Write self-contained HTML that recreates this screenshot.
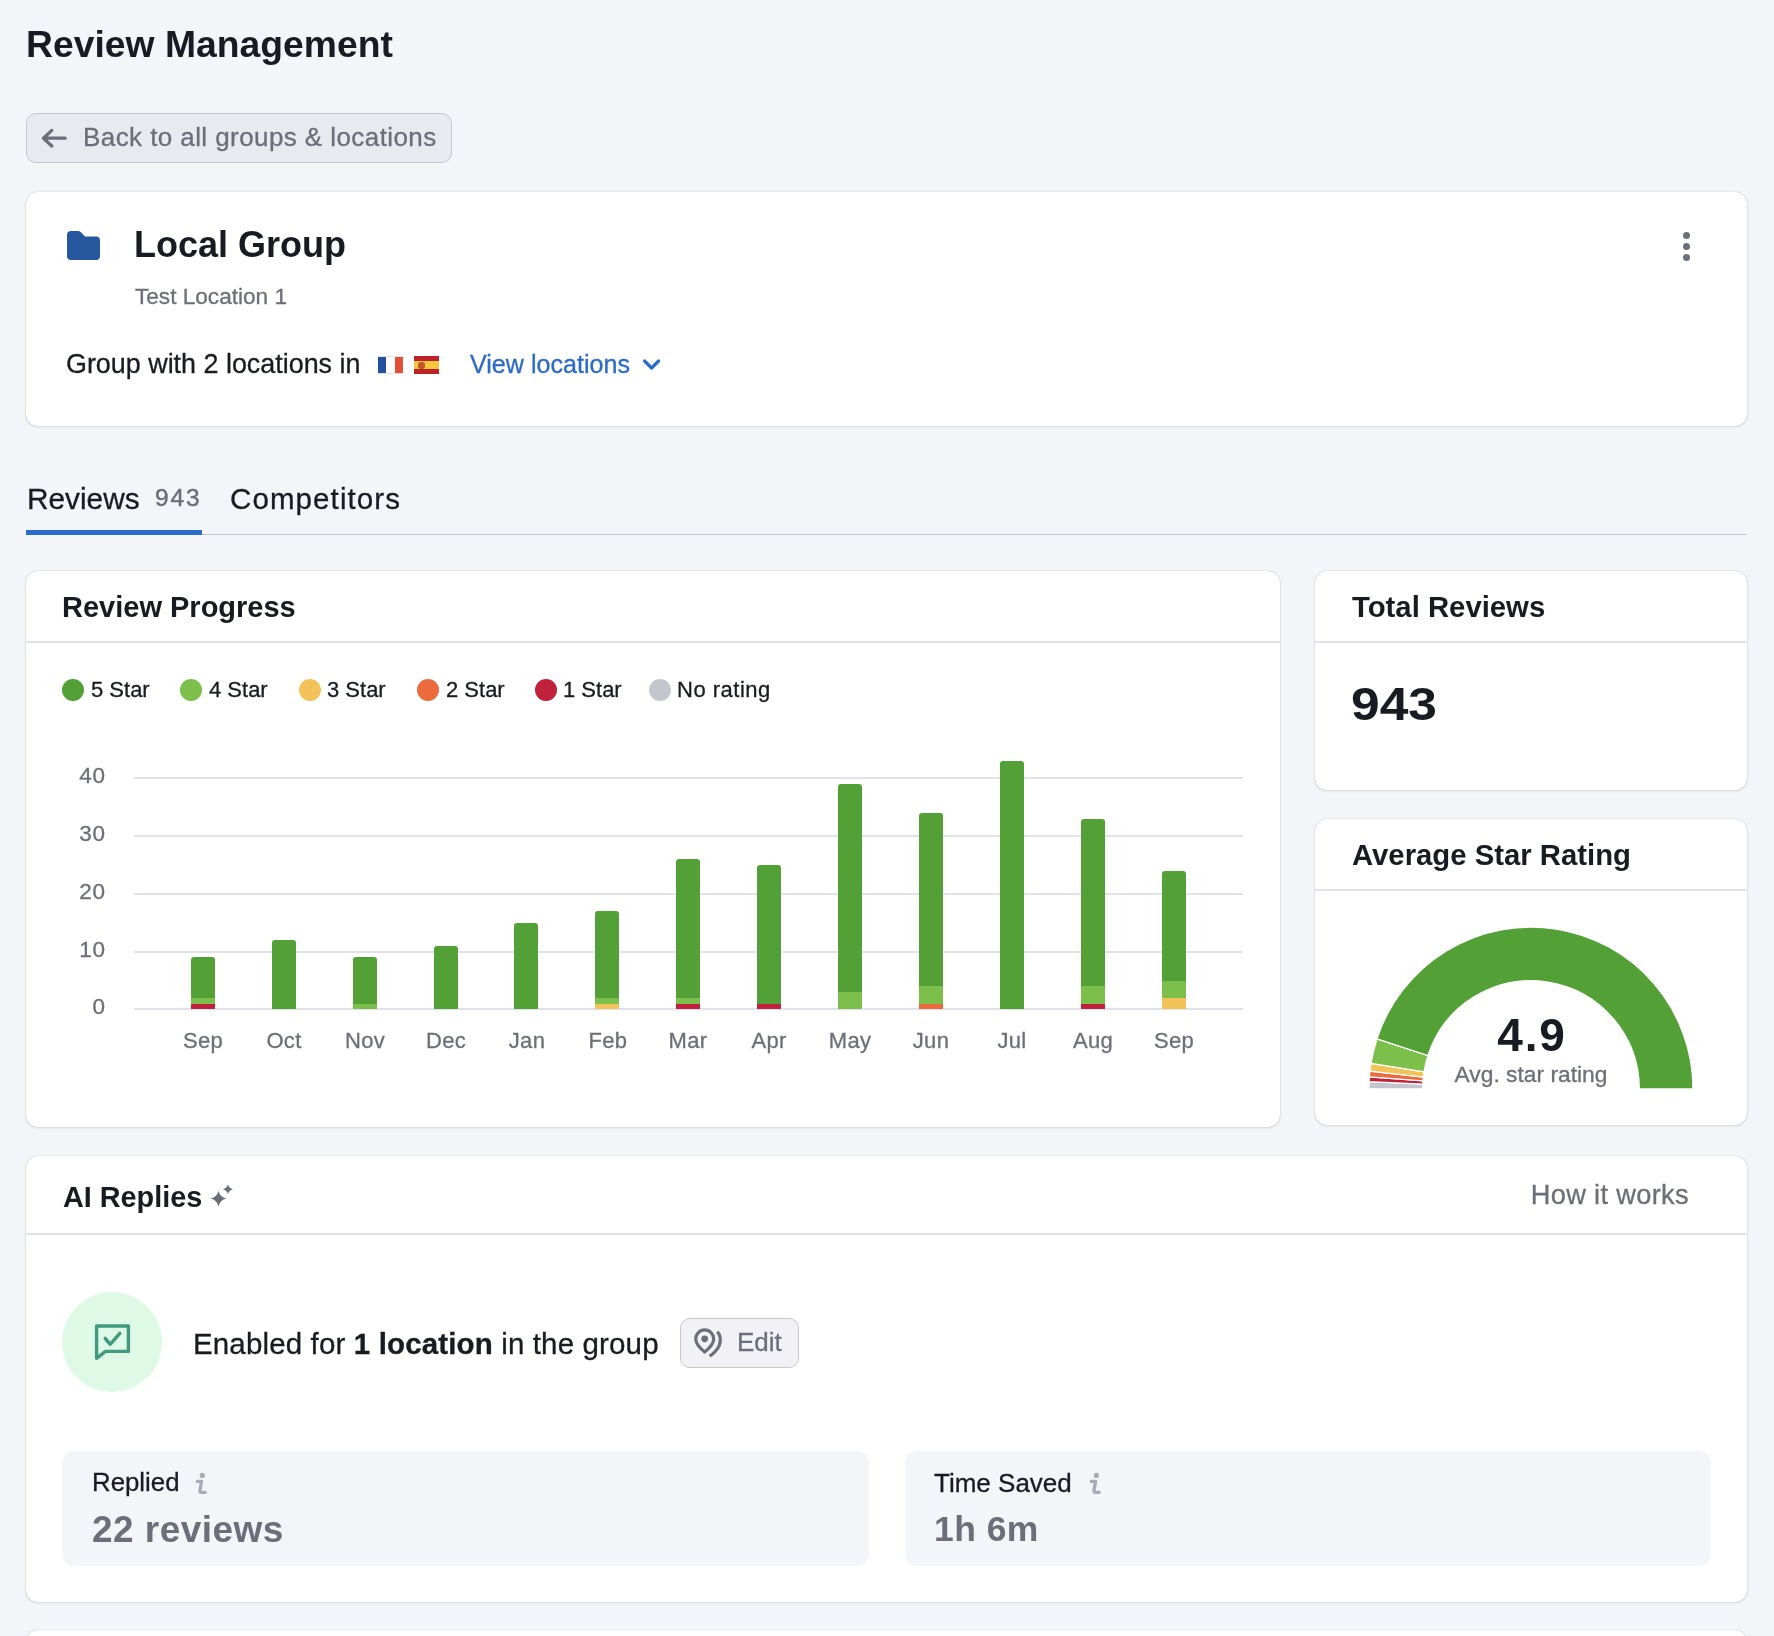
<!DOCTYPE html>
<html><head><meta charset="utf-8"><title>Review Management</title>
<style>
html,body{margin:0;padding:0;}
body{width:1774px;height:1636px;overflow:hidden;background:#F3F5F9;font-family:"Liberation Sans",sans-serif;position:relative;}
.t{position:absolute;white-space:nowrap;line-height:1;-webkit-font-smoothing:antialiased;will-change:transform;}
b{font-weight:700;}
</style></head><body>
<div class="t" style="left:26px;top:25.63px;font-size:37.3px;font-weight:700;color:#191B23;">Review Management</div>
<div style="position:absolute;left:26px;top:113px;width:426px;height:50px;background:#E9EAF0;border:1px solid #C6C8D0;box-sizing:border-box;border-radius:10px;"></div>
<svg style="position:absolute;left:40px;top:126px" width="28" height="24" viewBox="0 0 28 24"><path d="M11.8 4.4 L3.4 12.2 L11.8 20 M3.4 12.2 H25.2" fill="none" stroke="#6C6E79" stroke-width="3.3" stroke-linecap="round" stroke-linejoin="round"/></svg>
<div class="t" style="left:82.5px;top:123.99px;font-size:26px;font-weight:400;color:#6C6E79;letter-spacing:0.42px;-webkit-text-stroke:0.3px currentColor;">Back to all groups &amp; locations</div>
<div style="position:absolute;left:26px;top:192px;width:1721px;height:234px;background:#fff;border-radius:12px;box-shadow:0 0 1px rgba(25,27,35,.35),0 1px 3px rgba(25,27,35,.10);"></div>
<svg style="position:absolute;left:67px;top:231px" width="33" height="29" viewBox="0 0 33 29"><path d="M0 4 Q0 0 4 0 H10.5 Q12.8 0 14.3 1.4 L18 5.6 H29 Q33 5.6 33 9.6 V25 Q33 29 29 29 H4 Q0 29 0 25 Z" fill="#26579F"/></svg>
<div class="t" style="left:134px;top:226.93px;font-size:36px;font-weight:700;color:#191B23;">Local Group</div>
<div class="t" style="left:135px;top:285.87px;font-size:22.6px;font-weight:400;color:#6C6E79;-webkit-text-stroke:0.3px currentColor;">Test Location 1</div>
<div class="t" style="left:66px;top:351.23px;font-size:26.9px;font-weight:400;color:#191B23;-webkit-text-stroke:0.3px currentColor;">Group with 2 locations in</div>
<div style="position:absolute;left:378px;top:356px;width:25px;height:18px;background:linear-gradient(180deg,#E2E2E2 0 1px,transparent 1px calc(100% - 1px),#E2E2E2 calc(100% - 1px)),linear-gradient(90deg,#23519F 0 33%,#FFFFFF 33% 66%,#E2503B 66%);"></div>
<div style="position:absolute;left:414px;top:356px;width:25px;height:18px;background:linear-gradient(180deg,#BC2227 0 26%,#F4C73E 26% 74%,#BC2227 74%);"></div>
<div style="position:absolute;left:418.3px;top:362.2px;width:6.5px;height:6.5px;background:#B8362A;border-radius:45%;opacity:.8"></div>
<div class="t" style="left:469.5px;top:351.75px;font-size:25.1px;font-weight:400;color:#2B6BC7;-webkit-text-stroke:0.3px currentColor;">View locations</div>
<svg style="position:absolute;left:641px;top:357px" width="22" height="16" viewBox="0 0 22 16"><path d="M3.6 4 L10.6 11 L17.6 4" fill="none" stroke="#2B6BC7" stroke-width="3.2" stroke-linecap="round" stroke-linejoin="round"/></svg>
<div style="position:absolute;left:1682.8px;top:231.9px;width:7.2px;height:7.2px;border-radius:50%;background:#6C6E79"></div>
<div style="position:absolute;left:1682.8px;top:242.8px;width:7.2px;height:7.2px;border-radius:50%;background:#6C6E79"></div>
<div style="position:absolute;left:1682.8px;top:253.6px;width:7.2px;height:7.2px;border-radius:50%;background:#6C6E79"></div>
<div class="t" style="left:26.5px;top:483.77px;font-size:29.8px;font-weight:400;color:#191B23;-webkit-text-stroke:0.3px currentColor;">Reviews</div>
<div class="t" style="left:154.8px;top:485.56px;font-size:24.5px;font-weight:400;color:#6C6E79;letter-spacing:1.9px;-webkit-text-stroke:0.45px currentColor;">943</div>
<div class="t" style="left:230px;top:484.03px;font-size:29.5px;font-weight:400;color:#191B23;letter-spacing:1.1px;-webkit-text-stroke:0.3px currentColor;">Competitors</div>
<div style="position:absolute;left:26px;top:534px;width:1721px;height:1px;background:#C4C7CF;"></div>
<div style="position:absolute;left:26px;top:530px;width:176px;height:5px;background:#2B6BC7;"></div>
<div style="position:absolute;left:26px;top:571px;width:1253.5px;height:556px;background:#fff;border-radius:12px;box-shadow:0 0 1px rgba(25,27,35,.35),0 1px 3px rgba(25,27,35,.10);"></div>
<div class="t" style="left:62px;top:592.85px;font-size:29px;font-weight:700;color:#191B23;">Review Progress</div>
<div style="position:absolute;left:26px;top:641px;width:1253.5px;height:2px;background:#E0E1E9;"></div>
<div style="position:absolute;left:62px;top:678.5px;width:22px;height:22.0px;background:#52A036;border-radius:50%;"></div>
<div class="t" style="left:91.2px;top:678.88px;font-size:22px;font-weight:400;color:#191B23;-webkit-text-stroke:0.3px currentColor;">5 Star</div>
<div style="position:absolute;left:180px;top:678.5px;width:22px;height:22.0px;background:#7DBF4B;border-radius:50%;"></div>
<div class="t" style="left:208.8px;top:678.88px;font-size:22px;font-weight:400;color:#191B23;-webkit-text-stroke:0.3px currentColor;">4 Star</div>
<div style="position:absolute;left:299px;top:678.5px;width:22px;height:22.0px;background:#F3C35A;border-radius:50%;"></div>
<div class="t" style="left:327px;top:678.88px;font-size:22px;font-weight:400;color:#191B23;-webkit-text-stroke:0.3px currentColor;">3 Star</div>
<div style="position:absolute;left:417px;top:678.5px;width:22px;height:22.0px;background:#EB6B3C;border-radius:50%;"></div>
<div class="t" style="left:445.5px;top:678.88px;font-size:22px;font-weight:400;color:#191B23;-webkit-text-stroke:0.3px currentColor;">2 Star</div>
<div style="position:absolute;left:535px;top:678.5px;width:22px;height:22.0px;background:#C1213A;border-radius:50%;"></div>
<div class="t" style="left:562.5px;top:678.88px;font-size:22px;font-weight:400;color:#191B23;-webkit-text-stroke:0.3px currentColor;">1 Star</div>
<div style="position:absolute;left:649px;top:678.5px;width:22px;height:22.0px;background:#C4C6CE;border-radius:50%;"></div>
<div class="t" style="left:677px;top:678.88px;font-size:22px;font-weight:400;color:#191B23;letter-spacing:0.5px;-webkit-text-stroke:0.3px currentColor;">No rating</div>
<div style="position:absolute;left:134px;top:1008px;width:1109px;height:2px;background:#E0E1E9;"></div>
<div class="t" style="left:-694.4px;width:800px;text-align:right;top:996.35px;font-size:22.5px;font-weight:400;color:#6C6E79;letter-spacing:0.9px;-webkit-text-stroke:0.3px currentColor;">0</div>
<div style="position:absolute;left:134px;top:951px;width:1109px;height:2px;background:#E0E1E9;"></div>
<div class="t" style="left:-694.4px;width:800px;text-align:right;top:938.55px;font-size:22.5px;font-weight:400;color:#6C6E79;letter-spacing:0.9px;-webkit-text-stroke:0.3px currentColor;">10</div>
<div style="position:absolute;left:134px;top:893px;width:1109px;height:2px;background:#E0E1E9;"></div>
<div class="t" style="left:-694.4px;width:800px;text-align:right;top:880.75px;font-size:22.5px;font-weight:400;color:#6C6E79;letter-spacing:0.9px;-webkit-text-stroke:0.3px currentColor;">20</div>
<div style="position:absolute;left:134px;top:835px;width:1109px;height:2px;background:#E0E1E9;"></div>
<div class="t" style="left:-694.4px;width:800px;text-align:right;top:822.95px;font-size:22.5px;font-weight:400;color:#6C6E79;letter-spacing:0.9px;-webkit-text-stroke:0.3px currentColor;">30</div>
<div style="position:absolute;left:134px;top:777px;width:1109px;height:2px;background:#E0E1E9;"></div>
<div class="t" style="left:-694.4px;width:800px;text-align:right;top:765.15px;font-size:22.5px;font-weight:400;color:#6C6E79;letter-spacing:0.9px;-webkit-text-stroke:0.3px currentColor;">40</div>
<div style="position:absolute;left:190.8px;top:1003.72px;width:24.0px;height:5.779999999999973px;background:#C1213A;"></div>
<div style="position:absolute;left:190.8px;top:997.94px;width:24.0px;height:5.779999999999973px;background:#7DBF4B;"></div>
<div style="position:absolute;left:190.8px;top:957.48px;width:24.0px;height:40.460000000000036px;background:#52A036;border-radius:3px 3px 0 0;"></div>
<div class="t" style="left:-197.04999999999998px;width:800px;text-align:center;top:1029.78px;font-size:22px;font-weight:400;color:#6C6E79;letter-spacing:0.3px;-webkit-text-stroke:0.3px currentColor;">Sep</div>
<div style="position:absolute;left:271.72px;top:940.14px;width:24.0px;height:69.36000000000001px;background:#52A036;border-radius:3px 3px 0 0;"></div>
<div class="t" style="left:-116.13px;width:800px;text-align:center;top:1029.78px;font-size:22px;font-weight:400;color:#6C6E79;letter-spacing:0.3px;-webkit-text-stroke:0.3px currentColor;">Oct</div>
<div style="position:absolute;left:352.64px;top:1003.72px;width:24.0px;height:5.779999999999973px;background:#7DBF4B;"></div>
<div style="position:absolute;left:352.64px;top:957.48px;width:24.0px;height:46.24000000000001px;background:#52A036;border-radius:3px 3px 0 0;"></div>
<div class="t" style="left:-35.210000000000036px;width:800px;text-align:center;top:1029.78px;font-size:22px;font-weight:400;color:#6C6E79;letter-spacing:0.3px;-webkit-text-stroke:0.3px currentColor;">Nov</div>
<div style="position:absolute;left:433.56px;top:945.92px;width:24.0px;height:63.58000000000004px;background:#52A036;border-radius:3px 3px 0 0;"></div>
<div class="t" style="left:45.70999999999998px;width:800px;text-align:center;top:1029.78px;font-size:22px;font-weight:400;color:#6C6E79;letter-spacing:0.3px;-webkit-text-stroke:0.3px currentColor;">Dec</div>
<div style="position:absolute;left:514.48px;top:922.8px;width:24.0px;height:86.70000000000005px;background:#52A036;border-radius:3px 3px 0 0;"></div>
<div class="t" style="left:126.63px;width:800px;text-align:center;top:1029.78px;font-size:22px;font-weight:400;color:#6C6E79;letter-spacing:0.3px;-webkit-text-stroke:0.3px currentColor;">Jan</div>
<div style="position:absolute;left:595.4px;top:1003.72px;width:24.0px;height:5.779999999999973px;background:#F3C35A;"></div>
<div style="position:absolute;left:595.4px;top:997.94px;width:24.0px;height:5.779999999999973px;background:#7DBF4B;"></div>
<div style="position:absolute;left:595.4px;top:911.24px;width:24.0px;height:86.70000000000005px;background:#52A036;border-radius:3px 3px 0 0;"></div>
<div class="t" style="left:207.54999999999995px;width:800px;text-align:center;top:1029.78px;font-size:22px;font-weight:400;color:#6C6E79;letter-spacing:0.3px;-webkit-text-stroke:0.3px currentColor;">Feb</div>
<div style="position:absolute;left:676.32px;top:1003.72px;width:24.0px;height:5.779999999999973px;background:#C1213A;"></div>
<div style="position:absolute;left:676.32px;top:997.94px;width:24.0px;height:5.779999999999973px;background:#7DBF4B;"></div>
<div style="position:absolute;left:676.32px;top:859.22px;width:24.0px;height:138.72000000000003px;background:#52A036;border-radius:3px 3px 0 0;"></div>
<div class="t" style="left:288.47px;width:800px;text-align:center;top:1029.78px;font-size:22px;font-weight:400;color:#6C6E79;letter-spacing:0.3px;-webkit-text-stroke:0.3px currentColor;">Mar</div>
<div style="position:absolute;left:757.24px;top:1003.72px;width:24.0px;height:5.779999999999973px;background:#C1213A;"></div>
<div style="position:absolute;left:757.24px;top:865.0px;width:24.0px;height:138.72000000000003px;background:#52A036;border-radius:3px 3px 0 0;"></div>
<div class="t" style="left:369.39px;width:800px;text-align:center;top:1029.78px;font-size:22px;font-weight:400;color:#6C6E79;letter-spacing:0.3px;-webkit-text-stroke:0.3px currentColor;">Apr</div>
<div style="position:absolute;left:838.16px;top:992.16px;width:24.0px;height:17.340000000000032px;background:#7DBF4B;"></div>
<div style="position:absolute;left:838.16px;top:784.08px;width:24.0px;height:208.07999999999993px;background:#52A036;border-radius:3px 3px 0 0;"></div>
<div class="t" style="left:450.30999999999995px;width:800px;text-align:center;top:1029.78px;font-size:22px;font-weight:400;color:#6C6E79;letter-spacing:0.3px;-webkit-text-stroke:0.3px currentColor;">May</div>
<div style="position:absolute;left:919.08px;top:1003.72px;width:24.0px;height:5.779999999999973px;background:#EB6B3C;"></div>
<div style="position:absolute;left:919.08px;top:986.38px;width:24.0px;height:17.340000000000032px;background:#7DBF4B;"></div>
<div style="position:absolute;left:919.08px;top:812.98px;width:24.0px;height:173.39999999999998px;background:#52A036;border-radius:3px 3px 0 0;"></div>
<div class="t" style="left:531.23px;width:800px;text-align:center;top:1029.78px;font-size:22px;font-weight:400;color:#6C6E79;letter-spacing:0.3px;-webkit-text-stroke:0.3px currentColor;">Jun</div>
<div style="position:absolute;left:1000.0px;top:760.96px;width:24.0px;height:248.53999999999996px;background:#52A036;border-radius:3px 3px 0 0;"></div>
<div class="t" style="left:612.15px;width:800px;text-align:center;top:1029.78px;font-size:22px;font-weight:400;color:#6C6E79;letter-spacing:0.3px;-webkit-text-stroke:0.3px currentColor;">Jul</div>
<div style="position:absolute;left:1080.92px;top:1003.72px;width:24.0px;height:5.779999999999973px;background:#C1213A;"></div>
<div style="position:absolute;left:1080.92px;top:986.38px;width:24.0px;height:17.340000000000032px;background:#7DBF4B;"></div>
<div style="position:absolute;left:1080.92px;top:818.76px;width:24.0px;height:167.62px;background:#52A036;border-radius:3px 3px 0 0;"></div>
<div class="t" style="left:693.0700000000002px;width:800px;text-align:center;top:1029.78px;font-size:22px;font-weight:400;color:#6C6E79;letter-spacing:0.3px;-webkit-text-stroke:0.3px currentColor;">Aug</div>
<div style="position:absolute;left:1161.84px;top:997.94px;width:24.0px;height:11.559999999999945px;background:#F3C35A;"></div>
<div style="position:absolute;left:1161.84px;top:980.6px;width:24.0px;height:17.340000000000032px;background:#7DBF4B;"></div>
<div style="position:absolute;left:1161.84px;top:870.78px;width:24.0px;height:109.82000000000005px;background:#52A036;border-radius:3px 3px 0 0;"></div>
<div class="t" style="left:773.99px;width:800px;text-align:center;top:1029.78px;font-size:22px;font-weight:400;color:#6C6E79;letter-spacing:0.3px;-webkit-text-stroke:0.3px currentColor;">Sep</div>
<div style="position:absolute;left:1315px;top:571px;width:432px;height:219px;background:#fff;border-radius:12px;box-shadow:0 0 1px rgba(25,27,35,.35),0 1px 3px rgba(25,27,35,.10);"></div>
<div class="t" style="left:1351.5px;top:591.80px;font-size:29.3px;font-weight:700;color:#191B23;">Total Reviews</div>
<div style="position:absolute;left:1315px;top:641px;width:432px;height:2px;background:#E0E1E9;"></div>
<div class="t" style="left:1351px;top:681.26px;font-size:46px;font-weight:700;color:#191B23;transform:scaleX(1.12);transform-origin:0 0;">943</div>
<div style="position:absolute;left:1315px;top:819px;width:432px;height:306px;background:#fff;border-radius:12px;box-shadow:0 0 1px rgba(25,27,35,.35),0 1px 3px rgba(25,27,35,.10);"></div>
<div class="t" style="left:1351.5px;top:839.80px;font-size:29.3px;font-weight:700;color:#191B23;">Average Star Rating</div>
<div style="position:absolute;left:1315px;top:889px;width:432px;height:2px;background:#E0E1E9;"></div>
<svg style="position:absolute;left:1361px;top:918.5px" width="340" height="180" viewBox="-170 -170 340 180"><path d="M-162.00 -0.00 A162 162 0 0 1 -161.83 -7.35 L-108.19 -4.91 A108.3 108.3 0 0 0 -108.30 -0.00 Z" fill="#C4C6CE" stroke="#fff" stroke-width="1.3" stroke-linejoin="miter"/><path d="M-161.83 -7.35 A162 162 0 0 1 -161.54 -12.15 L-108.00 -8.12 A108.3 108.3 0 0 0 -108.19 -4.91 Z" fill="#C1213A" stroke="#fff" stroke-width="1.3" stroke-linejoin="miter"/><path d="M-161.54 -12.15 A162 162 0 0 1 -161.02 -17.78 L-107.65 -11.88 A108.3 108.3 0 0 0 -108.00 -8.12 Z" fill="#EB6B3C" stroke="#fff" stroke-width="1.3" stroke-linejoin="miter"/><path d="M-161.02 -17.78 A162 162 0 0 1 -159.96 -25.62 L-106.94 -17.13 A108.3 108.3 0 0 0 -107.65 -11.88 Z" fill="#F3C35A" stroke="#fff" stroke-width="1.3" stroke-linejoin="miter"/><path d="M-159.96 -25.62 A162 162 0 0 1 -154.07 -50.06 L-103.00 -33.47 A108.3 108.3 0 0 0 -106.94 -17.13 Z" fill="#7DBF4B" stroke="#fff" stroke-width="1.3" stroke-linejoin="miter"/><path d="M-154.07 -50.06 A162 162 0 0 1 162.00 -0.00 L108.30 -0.00 A108.3 108.3 0 0 0 -103.00 -33.47 Z" fill="#52A036" stroke="#fff" stroke-width="1.3" stroke-linejoin="miter"/></svg>
<div class="t" style="left:1132px;width:800px;text-align:center;top:1012.06px;font-size:46px;font-weight:700;color:#191B23;letter-spacing:1.8px;">4.9</div>
<div class="t" style="left:1131px;width:800px;text-align:center;top:1062.70px;font-size:22.8px;font-weight:400;color:#6C6E79;-webkit-text-stroke:0.3px currentColor;">Avg. star rating</div>
<div style="position:absolute;left:26px;top:1156px;width:1721px;height:446px;background:#fff;border-radius:12px;box-shadow:0 0 1px rgba(25,27,35,.35),0 1px 3px rgba(25,27,35,.10);"></div>
<div class="t" style="left:62.5px;top:1182.62px;font-size:28.8px;font-weight:700;color:#191B23;">AI Replies</div>
<svg style="position:absolute;left:208px;top:1180px" width="28" height="28" viewBox="0 0 28 28"><path d="M10.5 10.900000000000002 Q12.1 17.0 18.4 18.6 Q12.1 20.200000000000003 10.5 26.3 Q8.9 20.200000000000003 2.5999999999999996 18.6 Q8.9 17.0 10.5 10.900000000000002Z" fill="#6C6E79"/><path d="M19.9 4.500000000000001 Q21.0 8.200000000000001 24.9 9.3 Q21.0 10.4 19.9 14.100000000000001 Q18.799999999999997 10.4 14.899999999999999 9.3 Q18.799999999999997 8.200000000000001 19.9 4.500000000000001Z" fill="#6C6E79"/></svg>
<div class="t" style="left:888.5px;width:800px;text-align:right;top:1180.98px;font-size:27.2px;font-weight:400;color:#6C6E79;letter-spacing:0.35px;-webkit-text-stroke:0.3px currentColor;">How it works</div>
<div style="position:absolute;left:26px;top:1233px;width:1721px;height:2px;background:#E0E1E9;"></div>
<div style="position:absolute;left:62px;top:1292px;width:100px;height:100px;background:#DEFAE6;border-radius:50%;"></div>
<svg style="position:absolute;left:90px;top:1320px" width="44" height="44" viewBox="0 0 44 44"><path d="M6.6 6 H38.4 V31.4 H15.5 L6.6 38.3 Z" fill="none" stroke="#419A80" stroke-width="3.4" stroke-linejoin="round"/><path d="M15.2 18.3 L20.2 24.3 L29.8 13.4" fill="none" stroke="#419A80" stroke-width="3.4" stroke-linecap="round" stroke-linejoin="round"/></svg>
<div class="t" style="left:192.5px;top:1329.03px;font-size:29.5px;font-weight:400;color:#191B23;letter-spacing:0.14px;-webkit-text-stroke:0.3px currentColor;">Enabled for <b>1 location</b> in the group</div>
<div style="position:absolute;left:680px;top:1318px;width:119px;height:50px;background:#F2F2F6;border:1px solid #C6C8D0;box-sizing:border-box;border-radius:10px;"></div>
<svg style="position:absolute;left:690px;top:1324px" width="36" height="36" viewBox="0 0 36 36"><path d="M14.7 28 C8.2 22.6 5.7 18.6 5.7 14.9 A9 9 0 0 1 23.7 14.9 C23.7 18.6 21.2 22.6 14.7 28Z" fill="none" stroke="#6C6E79" stroke-width="3.2" stroke-linejoin="round"/><circle cx="14.7" cy="14.8" r="3.4" fill="#6C6E79"/><path d="M27.3 7.6 C30.3 10.8 31.2 16.5 29.2 21.5 C27.4 25.8 24 29.2 19.6 32.2" fill="none" stroke="#6C6E79" stroke-width="3.3"/></svg>
<div class="t" style="left:737px;top:1328.99px;font-size:26px;font-weight:400;color:#6C6E79;-webkit-text-stroke:0.3px currentColor;">Edit</div>
<div style="position:absolute;left:62px;top:1451px;width:807px;height:115px;background:#F3F5F9;border-radius:12px;"></div>
<div class="t" style="left:92px;top:1470.16px;font-size:25.8px;font-weight:400;color:#191B23;-webkit-text-stroke:0.3px currentColor;">Replied</div>
<svg style="position:absolute;left:194.0px;top:1471px" width="14" height="24" viewBox="0 0 14 24"><circle cx="8.3" cy="4.4" r="2.6" fill="#A9ABB6"/><path d="M3.3 10.4 H7.6 L5.9 19.6 Q5.6 21.4 7.4 21.4 H11.2" fill="none" stroke="#A9ABB6" stroke-width="3.3" stroke-linecap="round" stroke-linejoin="round"/></svg>
<div class="t" style="left:92px;top:1510.98px;font-size:37px;font-weight:700;color:#6C6E79;letter-spacing:0.45px;">22 reviews</div>
<div style="position:absolute;left:905px;top:1451px;width:806px;height:115px;background:#F3F5F9;border-radius:12px;"></div>
<div class="t" style="left:934px;top:1469.99px;font-size:26px;font-weight:400;color:#191B23;-webkit-text-stroke:0.3px currentColor;">Time Saved</div>
<svg style="position:absolute;left:1088.1px;top:1471px" width="14" height="24" viewBox="0 0 14 24"><circle cx="8.3" cy="4.4" r="2.6" fill="#A9ABB6"/><path d="M3.3 10.4 H7.6 L5.9 19.6 Q5.6 21.4 7.4 21.4 H11.2" fill="none" stroke="#A9ABB6" stroke-width="3.3" stroke-linecap="round" stroke-linejoin="round"/></svg>
<div class="t" style="left:934px;top:1512.25px;font-size:35.5px;font-weight:700;color:#6C6E79;letter-spacing:0.45px;">1h 6m</div>
<div style="position:absolute;left:26px;top:1630px;width:1721px;height:70px;background:#fff;border-radius:12px;box-shadow:0 0 1px rgba(25,27,35,.35),0 1px 3px rgba(25,27,35,.10);"></div>
</body></html>
